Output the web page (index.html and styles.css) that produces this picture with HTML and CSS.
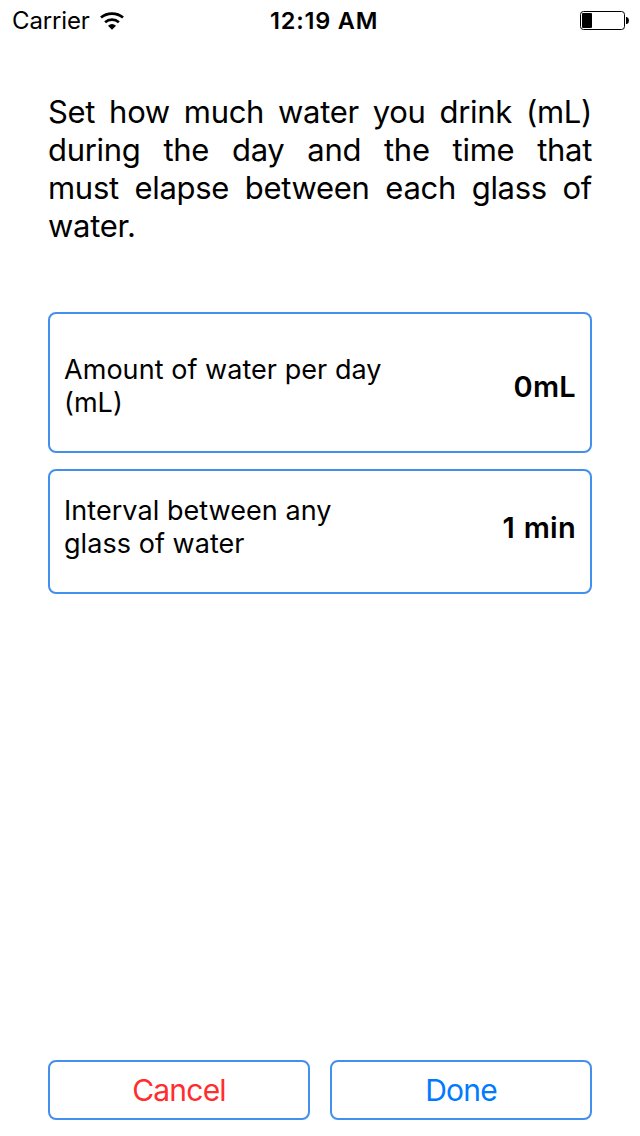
FILE: index.html
```html
<!DOCTYPE html>
<html lang="en">
<head>
<meta charset="utf-8">
<title>Water reminder</title>
<link rel="stylesheet" href="styles.css">
</head>
<body>
<div class="screen">
  <header class="status">
    <div class="carrier"><span class="carrier-name">Carrier</span>
      <svg class="wifi" width="24" height="18" viewBox="0 0 24 18"><g fill="none" stroke="#000" stroke-width="2.700"><path d="M1 5.600C7 .2 17 .2 23 5.600"/><path d="M5.100 10.200c4-3.500 9.800-3.500 13.800 0"/></g><path d="M12 17.700l-4-4q4-3.200 8 0z"/></svg>
    </div>
    <span class="time">12:19 AM</span>
    <svg class="battery" width="49" height="20" viewBox="0 0 49 20"><rect x=".5" y=".5" width="44" height="18" rx="3" fill="none" stroke="#000"/><rect x="2" y="2" width="10" height="15" rx="1"/><path d="M46 6h1q2 1 2 3.500t-2 3.500h-1z"/></svg>
  </header>
  <main class="content">
    <p class="intro">Set how much water you drink (mL) during the day and the time that must&nbsp;elapse between each glass of water.</p>
    <section class="card card-amount"><div class="label">Amount of water per day<br>(mL)</div><div class="value">0mL</div></section>
    <section class="card card-interval"><div class="label">Interval between any<br>glass of water</div><div class="value value-interval">1 min</div></section>
  </main>
  <footer class="actions"><button class="button cancel">Cancel</button><button class="button done">Done</button></footer>
</div>
</body>
</html>
```
FILE: styles.css
```css
* { box-sizing: border-box; }
body { margin: 0; background: #fff; color: #000; font-family: Inter, "Liberation Sans", sans-serif; }
.screen { width: 640px; height: 1136px; display: flex; flex-direction: column; }
.status { height: 42px; display: grid; grid-template-columns: 258px 1fr auto; align-items: center; padding: 0 12px 0 12px; font-size: 24px; line-height: 42px; }
.carrier { display: flex; align-items: center; gap: 10.5px; }
.carrier-name { letter-spacing: -.15px; }
.wifi { margin-top: -1px; }
.time { font-weight: 600; font-size: 23.5px; letter-spacing: .8px; }
.battery { justify-self: end; margin-right: -1px; }
.content { flex: 1; padding: 51px 48px 0; }
.intro { margin: 0 0 67px; font-size: 31px; line-height: 38px; letter-spacing: -.3px; text-align: justify; }
.card { display: flex; align-items: center; justify-content: space-between; border: 2px solid #438fec; border-radius: 8px; padding: 0 14px; }
.card-amount { height: 141px; margin-bottom: 16px; padding-top: 7px; }
.card-interval { height: 125px; padding-bottom: 9px; }
.label { font-size: 27px; line-height: 33px; letter-spacing: .05px; }
.value { font-size: 29px; line-height: 34px; padding-top: 2px; font-weight: 600; letter-spacing: .3px; }
.value-interval { word-spacing: 1px; }
.actions { display: grid; grid-template-columns: 1fr 1fr; gap: 20px; padding: 0 48px 16px; }
.button { height: 60px; border: 2px solid #438fec; border-radius: 8px; background: #fff; font: 400 30px Inter, "Liberation Sans", sans-serif; letter-spacing: -.8px; padding: 0; }
.cancel { color: #ff2d2d; }
.done { color: #007aff; }
```
